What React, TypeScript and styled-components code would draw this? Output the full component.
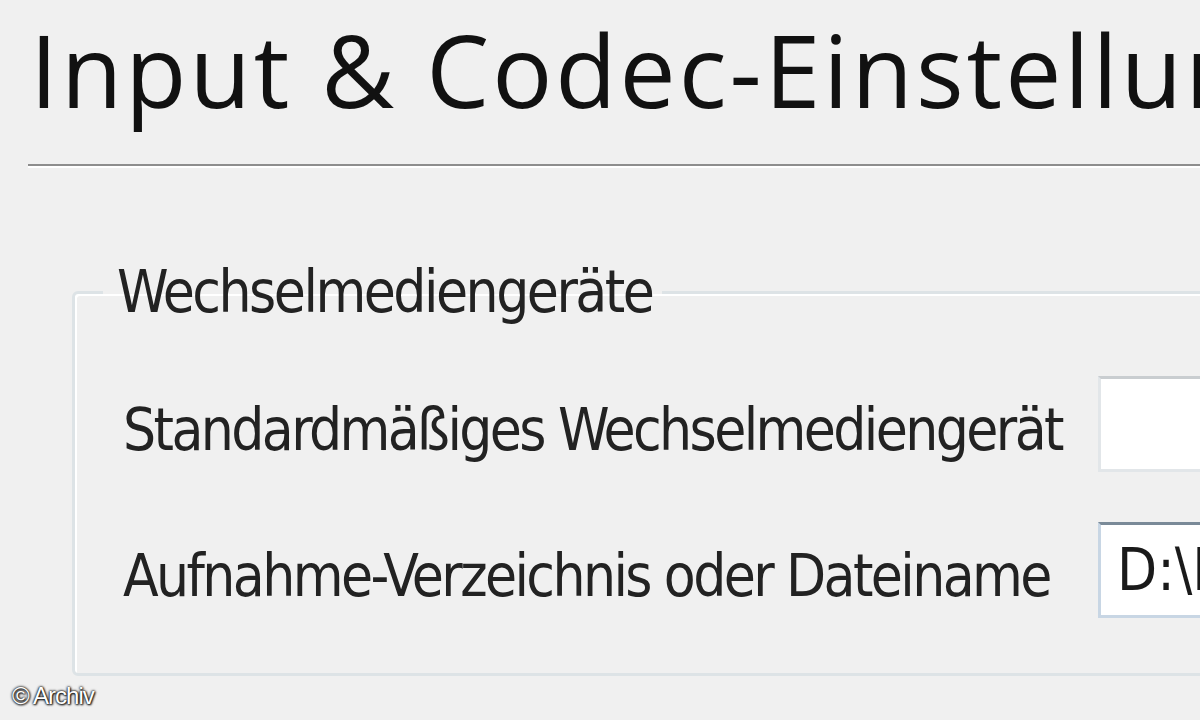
import React from "react";
import styled, { createGlobalStyle } from "styled-components";

const GlobalStyle = createGlobalStyle`
  html, body {
    margin: 0;
    padding: 0;
    background: #f0f0f0;
    overflow: hidden;
  }
  #root {
    width: 1200px;
    height: 720px;
  }
`;

const Page = styled.div`
  position: relative;
  width: 1200px;
  height: 720px;
  overflow: hidden;
  background: #f0f0f0;
  display: flex;
  flex-direction: column;
`;

const Title = styled.h1`
  margin: 0;
  padding: 4px 0 0 30px;
  white-space: nowrap;
  font-family: "Open Sans", "Noto Sans", sans-serif;
  font-weight: 400;
  font-size: 100px;
  line-height: 130px;
  letter-spacing: 3px;
  color: #111;
`;

const Rule = styled.div`
  margin: 30px 0 0 28px;
  height: 2px;
  width: 1400px;
  background: #8d8d8d;
  border-bottom: 2px solid #ffffff;
`;

const GroupBox = styled.fieldset`
  margin: 90px 0 0 72px;
  padding: 64px 0 0 48px;
  width: 1300px;
  height: 348px;
  border: 3px solid #dde3e6;
  border-radius: 6px;
  box-shadow: inset 2px 2px 0 #ffffff;
`;

const Legend = styled.legend`
  padding: 0 10px 0 14px;
  margin-left: -20px;
  font-family: "DejaVu Sans Condensed", "DejaVu Sans", sans-serif;
  font-size: 58px;
  color: #222;
  letter-spacing: -2.5px;
`;

const Row = styled.div`
  display: flex;
  align-items: center;
  height: 80px;

  & + & {
    margin-top: 66px;
  }
`;

const Label = styled.span`
  width: 975px;
  white-space: nowrap;
  font-family: "DejaVu Sans Condensed", "DejaVu Sans", sans-serif;
  font-size: 58px;
  color: #222;
  letter-spacing: -2.6px;
`;

const TextField = styled.div<{ $focused?: boolean }>`
  width: 300px;
  height: 96px;
  margin-top: -12px;
  flex-shrink: 0;
  box-sizing: border-box;
  background: #ffffff;
  border: 3px solid ${(p) => (p.$focused ? "#c8d6e4" : "#e2e6e9")};
  border-top-color: ${(p) => (p.$focused ? "#7a8a98" : "#c9cdd0")};
  padding-left: 16px;
  display: flex;
  align-items: center;
  white-space: nowrap;
  overflow: hidden;
  font-family: "DejaVu Sans Condensed", "DejaVu Sans", sans-serif;
  font-size: 58px;
  color: #1a1a1a;
`;

const Credit = styled.div`
  position: absolute;
  left: 12px;
  bottom: 10px;
  font-family: "Liberation Sans", Arial, sans-serif;
  font-size: 24px;
  letter-spacing: -1px;
  color: #ffffff;
  text-shadow: 0 0 2px #000, 0 0 3px #000, 1px 1px 2px #333;
`;

export default function App() {
  return (
    <>
      <GlobalStyle />
      <Page>
        <Title>Input &amp; Codec-Einstellungen</Title>
        <Rule />
        <GroupBox>
          <Legend>Wechselmediengeräte</Legend>
          <Row>
            <Label>Standardmäßiges Wechselmediengerät</Label>
            <TextField />
          </Row>
          <Row>
            <Label>Aufnahme-Verzeichnis oder Dateiname</Label>
            <TextField $focused>D:\Dokumente</TextField>
          </Row>
        </GroupBox>
        <Credit>© Archiv</Credit>
      </Page>
    </>
  );
}
